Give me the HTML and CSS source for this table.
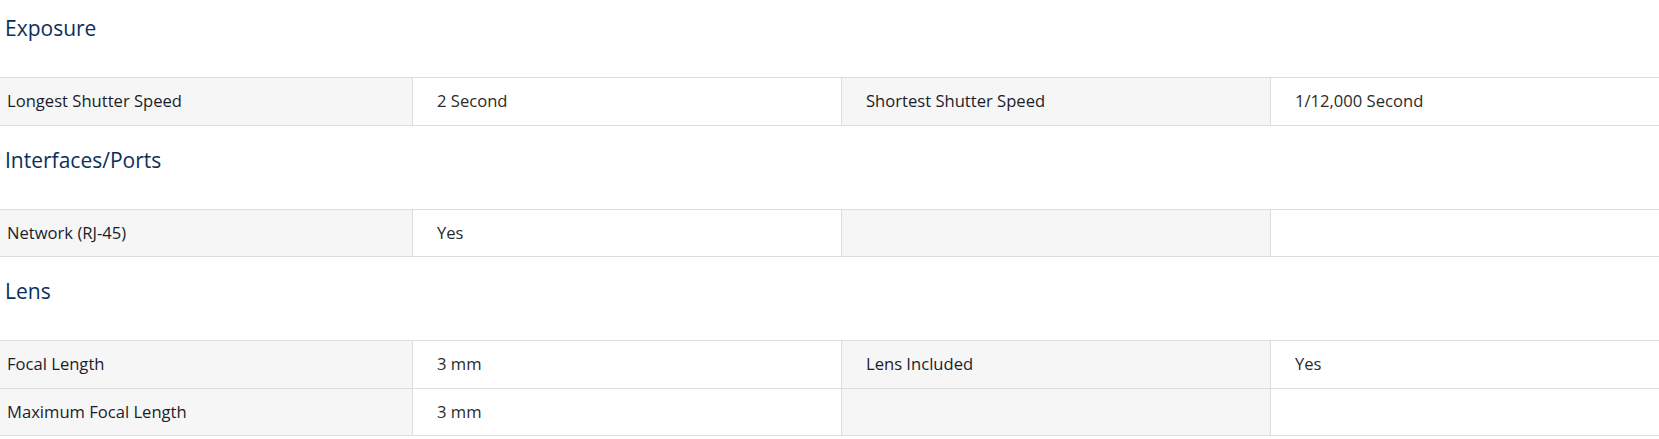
FILE: index.html
```html
<!DOCTYPE html>
<html lang="en">
<head>
<meta charset="utf-8">
<title>Specifications</title>
<link rel="stylesheet" href="styles.css">
</head>
<body>
<div class="specs">
  <section class="group">
    <h3 class="group-title">Exposure</h3>
    <div class="spec-table">
      <div class="spec-row">
        <div class="cell label first">Longest Shutter Speed</div>
        <div class="cell value">2 Second</div>
        <div class="cell label">Shortest Shutter Speed</div>
        <div class="cell value">1/12,000 Second</div>
      </div>
    </div>
  </section>
  <section class="group">
    <h3 class="group-title">Interfaces/Ports</h3>
    <div class="spec-table">
      <div class="spec-row">
        <div class="cell label first">Network (RJ-45)</div>
        <div class="cell value">Yes</div>
        <div class="cell label"></div>
        <div class="cell value"></div>
      </div>
    </div>
  </section>
  <section class="group">
    <h3 class="group-title">Lens</h3>
    <div class="spec-table">
      <div class="spec-row">
        <div class="cell label first">Focal Length</div>
        <div class="cell value">3 mm</div>
        <div class="cell label">Lens Included</div>
        <div class="cell value">Yes</div>
      </div>
      <div class="spec-row">
        <div class="cell label first">Maximum Focal Length</div>
        <div class="cell value">3 mm</div>
        <div class="cell label"></div>
        <div class="cell value"></div>
      </div>
    </div>
  </section>
</div>
</body>
</html>
```

FILE: styles.css
```css
html, body {
  margin: 0;
  padding: 0;
  background: #ffffff;
}

body {
  font-family: "Open Sans", "Noto Sans", sans-serif;
  color: #222222;
}

.specs {
  display: flex;
  flex-direction: column;
}

.group-title {
  margin: 0;
  padding: 22px 0 37px 5px;
  font-size: 21px;
  line-height: 24px;
  font-weight: 400;
  color: #0b2f5b;
}

.group:first-child .group-title {
  padding-top: 16px;
  padding-bottom: 37px;
}

.spec-table {
  border-bottom: 1px solid #dddddd;
}

.spec-row {
  display: grid;
  grid-template-columns: 412px 429px 429px 1fr;
  height: 46.5px;
  border-top: 1px solid #dddddd;
}

.cell {
  display: flex;
  align-items: center;
  padding-left: 24px;
  font-size: 16.6px;
  line-height: 20px;
  border-left: 1px solid #dddddd;
}

.cell.first {
  padding-left: 7px;
  border-left: none;
}

.label {
  background: #f6f6f6;
  color: #1a1d2b;
}

.value {
  background: #ffffff;
  color: #2b2b2b;
}
```
